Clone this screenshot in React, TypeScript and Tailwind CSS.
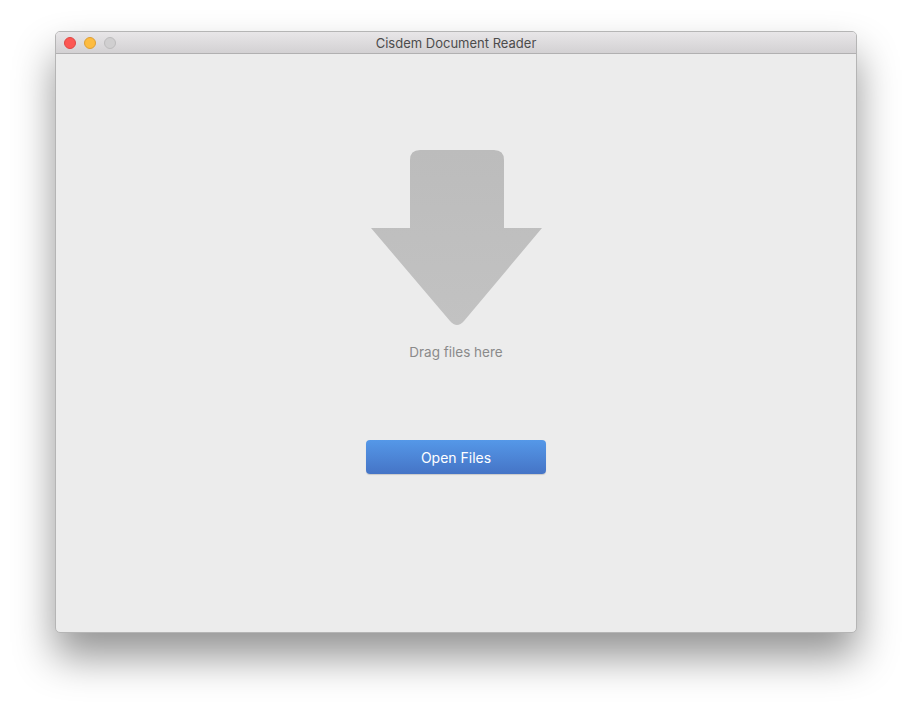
import React from 'react';

const TrafficLights: React.FC = () => (
  <div className="flex items-center gap-[8px]">
    <span className="w-[12px] h-[12px] rounded-full bg-[#fc5753] border border-[#df4744]" />
    <span className="w-[12px] h-[12px] rounded-full bg-[#fdbc40] border border-[#de9f34]" />
    <span className="w-[12px] h-[12px] rounded-full bg-[#d0cfd0] border border-[#bdbcbd]" />
  </div>
);

const DropArrow: React.FC = () => (
  <svg width="172" height="178" viewBox="0 0 172 178">
    <defs>
      <linearGradient id="arrowFill" x1="0" y1="0" x2="0" y2="1">
        <stop offset="0" stopColor="#bcbcbc" />
        <stop offset="1" stopColor="#c2c2c2" />
      </linearGradient>
    </defs>
    <path
      d="M39 10 Q39 0 49 0 L123 0 Q133 0 133 10 L133 78 L171 78 L93 171 Q86 179 79 171 L0 78 L39 78 Z"
      fill="url(#arrowFill)"
    />
  </svg>
);

const App: React.FC = () => {
  return (
    <div className="w-[912px] h-[712px] bg-white pt-[31px] pl-[55px] font-['Inter','Liberation_Sans',sans-serif]">
      {/* Window */}
      <div className="w-[802px] h-[602px] rounded-[5px] border border-[#b5b5b5] bg-[#ececec] overflow-hidden flex flex-col shadow-[0_24px_40px_rgba(0,0,0,0.42)]">
        {/* Title bar */}
        <div className="relative h-[22px] flex items-center pl-[8px] pt-[1px] bg-gradient-to-b from-[#e8e6e8] to-[#d3d1d3] border-b border-[#b1b0b1]">
          <TrafficLights />
          <div className="absolute inset-0 pt-[2px] flex items-center justify-center text-[13px] text-[#4c4c4c]">
            Cisdem Document Reader
          </div>
        </div>

        {/* Content */}
        <div className="flex-1 flex flex-col items-center">
          <div className="mt-[96px] ml-[2px]">
            <DropArrow />
          </div>
          <p className="mt-[16px] text-[13.5px] leading-[17px] text-[#8a8a8a]">Drag files here</p>
          <button className="mt-[79px] w-[180px] h-[34px] rounded-[4px] bg-gradient-to-b from-[#5598e8] to-[#4574c6] text-white text-[14px] shadow-[0_1px_1px_rgba(0,0,0,0.15)]">
            Open Files
          </button>
        </div>
      </div>
    </div>
  );
};

export default App;
